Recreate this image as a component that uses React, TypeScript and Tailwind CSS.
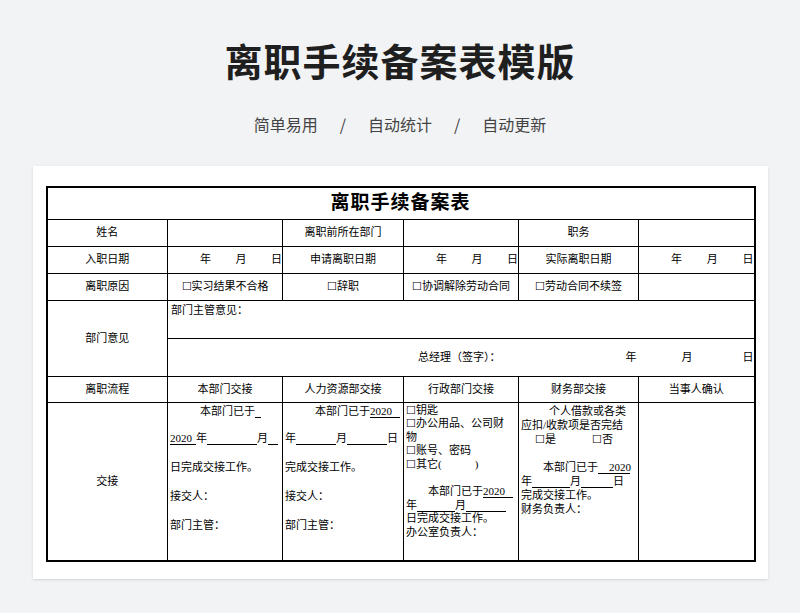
import * as React from "react";

const F = { fontFamily: '"Liberation Serif","Noto Sans CJK SC",serif' };
const td = "border border-black text-[11px] text-center align-middle p-0";
const U = ({ w, children }: { w: number; children?: React.ReactNode }) => (
  <span className="inline-block border-b border-black text-left leading-[12px] align-baseline" style={{ width: w }}>{children ?? "\u00a0"}</span>
);
const last = td + " text-left align-top pl-[2px] whitespace-nowrap overflow-hidden";

export default function App() {
  return (
    <div className="min-h-[613px] bg-[#f2f3f5] flex flex-col items-center" style={{ fontFamily: '"Noto Sans CJK SC",sans-serif' }}>
      <h1 className="mt-[34px] text-[38px] leading-[52px] font-bold text-[#1f1f1f] tracking-[1px]">离职手续备案表模版</h1>
      <div className="mt-[26px] flex gap-[22px] text-[16px] text-[#444] leading-6">
        <span>简单易用</span><span>/</span><span>自动统计</span><span>/</span><span>自动更新</span>
      </div>
      <div className="mt-[30px] w-[735px] h-[413px] bg-white shadow-sm pt-[20px] pl-[13px]" style={F}>
        <table className="border-collapse border-2 border-black text-black" style={{ width: 708, tableLayout: "fixed" }}>
          <colgroup>
            <col style={{ width: 121 }} /><col style={{ width: 115 }} /><col style={{ width: 121 }} />
            <col style={{ width: 115 }} /><col style={{ width: 120 }} /><col style={{ width: 116 }} />
          </colgroup>
          <tbody>
            <tr className="h-[32px]"><td colSpan={6} className={td + " text-[19px] leading-[28px] font-bold tracking-[1px]"}>离职手续备案表</td></tr>
            <tr className="h-[27px]"><td className={td}>姓名</td><td className={td}></td><td className={td}>离职前所在部门</td><td className={td}></td><td className={td}>职务</td><td className={td}></td></tr>
            <tr className="h-[27px]">
              <td className={td}>入职日期</td>
              <td className={td}><div className="flex justify-between pl-[32px]"><span>年</span><span>月</span><span>日</span></div></td>
              <td className={td}>申请离职日期</td>
              <td className={td}><div className="flex justify-between pl-[32px]"><span>年</span><span>月</span><span>日</span></div></td>
              <td className={td}>实际离职日期</td>
              <td className={td}><div className="flex justify-between pl-[32px]"><span>年</span><span>月</span><span>日</span></div></td>
            </tr>
            <tr className="h-[27px]"><td className={td}>离职原因</td><td className={td}>☐实习结果不合格</td><td className={td}>☐辞职</td><td className={td}>☐协调解除劳动合同</td><td className={td}>☐劳动合同不续签</td><td className={td}></td></tr>
            <tr className="h-[38px]"><td rowSpan={2} className={td}>部门意见</td><td colSpan={5} className={td + " text-left align-top pl-[3px] pt-[1px]"}>部门主管意见：</td></tr>
            <tr className="h-[38px]"><td colSpan={5} className={td}>
              <div className="flex pl-[250px]"><span>总经理（签字）：</span><span className="ml-[125px]">年</span><span className="ml-[45px]">月</span><span className="ml-auto">日</span></div>
            </td></tr>
            <tr className="h-[26px]"><td className={td}>离职流程</td><td className={td}>本部门交接</td><td className={td}>人力资源部交接</td><td className={td}>行政部门交接</td><td className={td}>财务部交接</td><td className={td}>当事人确认</td></tr>
            <tr className="h-[159px]">
              <td className={td}>交接</td>
              <td className={last + " leading-[29px]"}>
                <div className="pl-[30px] leading-[14px] pt-[1px]">本部门已于<U w={6} /></div>
                <div className="mt-[6px]"><U w={26}>2020</U>年<U w={50} />月<U w={10} /></div>
                <div>日完成交接工作。</div><div>接交人：</div><div>部门主管：</div>
              </td>
              <td className={last + " leading-[29px]"}>
                <div className="pl-[30px] leading-[14px] pt-[1px]">本部门已于<U w={30}> 2020</U></div>
                <div className="mt-[6px]">年<U w={40} />月<U w={40} />日</div>
                <div>完成交接工作。</div><div>接交人：</div><div>部门主管：</div>
              </td>
              <td className={last + " leading-[13.5px] pt-[1px]"}>
                <div>☐钥匙</div><div>☐办公用品、公司财</div><div>物</div><div>☐账号、密码</div><div>☐其它(　　　)</div>
                <div className="mt-[14px] pl-[22px]">本部门已于<U w={30}> 2020</U></div>
                <div>年<U w={38} />月<U w={40} /></div>
                <div>日完成交接工作。</div><div>办公室负责人：</div>
              </td>
              <td className={last + " leading-[14px] pt-[1px]"}>
                <div className="pl-[28px]">个人借款或各类</div><div>应扣/收款项是否完结</div>
                <div className="flex pl-[14px] gap-[36px]"><span>☐是</span><span>☐否</span></div>
                <div className="mt-[14px] pl-[22px]">本部门已于<U w={32}>　2020</U></div>
                <div>年<U w={38} />月<U w={32} />日</div>
                <div>完成交接工作。</div><div>财务负责人：</div>
              </td>
              <td className={td}></td>
            </tr>
          </tbody>
        </table>
      </div>
    </div>
  );
}
